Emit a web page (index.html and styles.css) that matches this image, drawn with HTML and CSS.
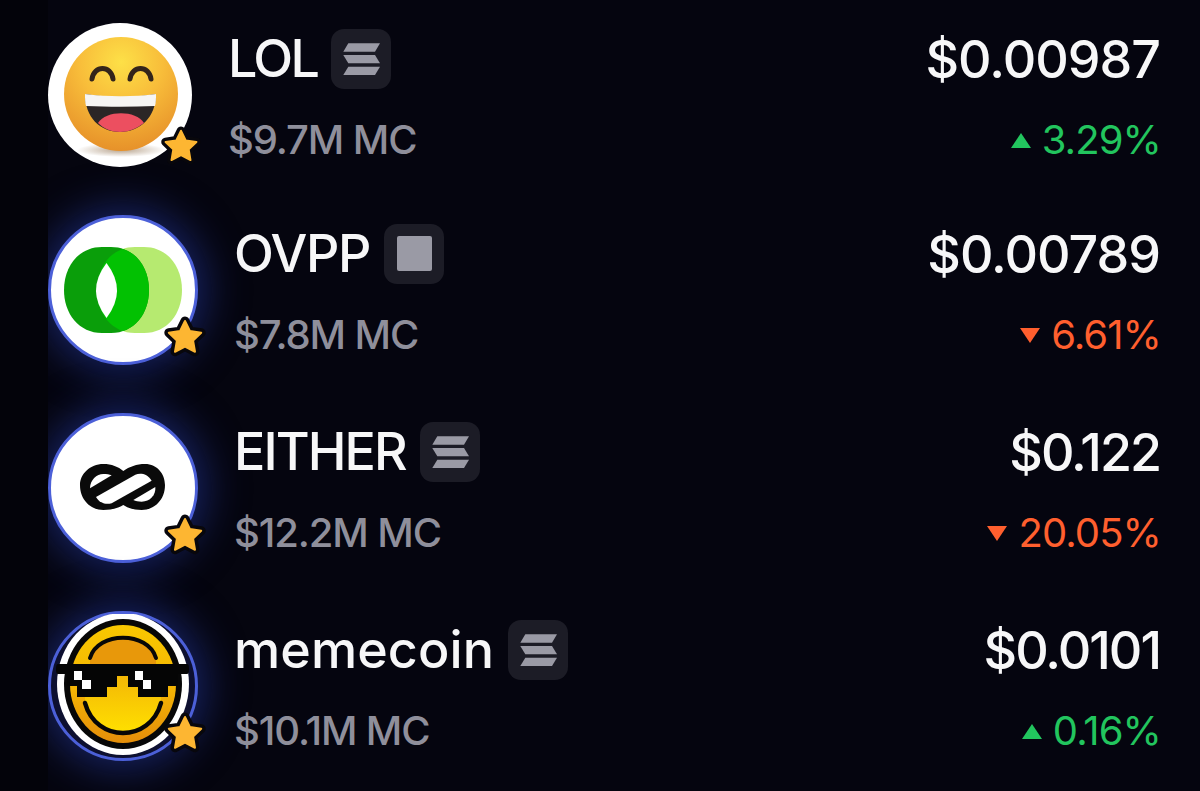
FILE: index.html
```html
<!DOCTYPE html>
<html lang="en">
<head>
    <meta charset="UTF-8">
    <title>Tokens</title>
    <link rel="stylesheet" href="styles.css">
</head>
<body>

<svg class="defs" width="0" height="0">
    <symbol id="solana" viewBox="0 0 60 60">
        <path d="M17.3 14.3H49L44 22.7H12.3Z"/>
        <path d="M12.3 26H44L49 34.3H17.3Z"/>
        <path d="M17.3 37.7H49L44 46H12.3Z"/>
    </symbol>
    <symbol id="star" viewBox="0 0 44 44">
        <polygon points="22,6 27,16.1 38.2,17.75 30.1,25.6 32,36.75 22,31.5 12,36.75 13.9,25.6 5.8,17.75 17,16.1" fill="#08070c" stroke="#08070c" stroke-width="9" stroke-linejoin="round"/>
        <polygon points="22,6 27,16.1 38.2,17.75 30.1,25.6 32,36.75 22,31.5 12,36.75 13.9,25.6 5.8,17.75 17,16.1" fill="#fdb632" stroke="#fdb632" stroke-width="2" stroke-linejoin="round"/>
    </symbol>
</svg>

<div class="token-list">

    <!-- LOL -->
    <div class="token-row">
        <div class="avatar avatar-plain">
            <svg viewBox="0 0 144 144" width="144" height="144">
                <defs>
                    <radialGradient id="faceFill" cx="50%" cy="22%" r="82%">
                        <stop offset="0" stop-color="#fde047"/>
                        <stop offset="0.45" stop-color="#f8bd3a"/>
                        <stop offset="1" stop-color="#e58d28"/>
                    </radialGradient>
                    <radialGradient id="floorFill" cx="50%" cy="50%" r="50%">
                        <stop offset="0" stop-color="#b8a48e"/>
                        <stop offset="1" stop-color="#ffffff"/>
                    </radialGradient>
                </defs>
                <ellipse cx="73" cy="127" rx="44" ry="7" fill="url(#floorFill)"/>
                <circle cx="73" cy="71" r="57" fill="url(#faceFill)"/>
                <path d="M44 56C46 42 63 42 65 56" fill="none" stroke="#33241a" stroke-width="5" stroke-linecap="round"/>
                <path d="M82 56C84 42 101 42 103 56" fill="none" stroke="#33241a" stroke-width="5" stroke-linecap="round"/>
                <path d="M37 71C60 75 86 75 108 71C108 94 92 109 72 109C52 109 37 94 37 71Z" fill="#2b2626"/>
                <path d="M37 71C60 74 86 74 108 71C108 76 108 79 107 83C84 84 60 84 38 83C37 79 37 76 37 71Z" fill="#f6f5f3"/>
                <path d="M50 100C58 87 88 87 96 100C88 106 80 109 72 109C64 109 56 106 50 100Z" fill="#ec4f60"/>
            </svg>
            <svg class="star"><use href="#star"/></svg>
        </div>
        <div class="token-info">
            <div class="name-line">
                <span class="token-name name-tight">LOL</span>
                <span class="chain-chip"><svg class="chain-icon"><use href="#solana"/></svg></span>
            </div>
            <div class="token-mc">$9.7M MC</div>
        </div>
        <div class="token-price">
            <div class="price">$0.00987</div>
            <div class="change up"><i class="arrow"></i>3.29%</div>
        </div>
    </div>

    <!-- OVPP -->
    <div class="token-row">
        <div class="avatar avatar-white">
            <svg viewBox="3 3 144 144" width="144" height="144">
                <defs>
                    <path id="ovppLeft" d="M54 32H63C86 32 101 51 101 75C101 99 86 118 63 118H54C31 118 16 99 16 75C16 51 31 32 54 32Z"/>
                    <path id="ovppRight" d="M87 32H96C119 32 134 51 134 75C134 99 119 118 96 118H87C64 118 49 99 49 75C49 51 64 32 87 32Z"/>
                    <clipPath id="ovppClip"><use href="#ovppRight"/></clipPath>
                </defs>
                <use href="#ovppRight" fill="#b6ea70"/>
                <use href="#ovppLeft" fill="#0a9e0a"/>
                <use href="#ovppLeft" fill="#02c102" clip-path="url(#ovppClip)"/>
                <path d="M58.5 48Q37.5 75.5 58.5 103Q79.5 75.5 58.5 48Z" fill="#fff"/>
            </svg>
            <svg class="star"><use href="#star"/></svg>
        </div>
        <div class="token-info">
            <div class="name-line">
                <span class="token-name">OVPP</span>
                <span class="chain-chip"><i class="square-icon"></i></span>
            </div>
            <div class="token-mc">$7.8M MC</div>
        </div>
        <div class="token-price">
            <div class="price">$0.00789</div>
            <div class="change down"><i class="arrow"></i>6.61%</div>
        </div>
    </div>

    <!-- EITHER -->
    <div class="token-row">
        <div class="avatar avatar-white">
            <svg viewBox="3 3 144 144" width="144" height="144">
                <g transform="translate(22 37) scale(0.3333)">
                    <path d="M100 42C125 42 145 50 160 63C178 50 200 42 225 42C262 42 285 72 285 105C285 148 255 180 215 180C193 180 175 175 160 165C142 175 125 180 100 180C60 180 30 148 30 105C30 72 60 42 100 42Z" fill="#0a0a0a"/>
                    <path d="M60 115C60 90 80 72 100 72C110 72 118 73 125 76Z" fill="#fff"/>
                    <path d="M78 141L196 74C210 68 232 70 245 92L125 160C105 165 88 158 78 141Z" fill="#fff"/>
                    <path d="M190 150L256 111C258 135 240 155 215 155C205 155 197 153 190 150Z" fill="#fff"/>
                </g>
            </svg>
            <svg class="star"><use href="#star"/></svg>
        </div>
        <div class="token-info">
            <div class="name-line">
                <span class="token-name name-mid">EITHER</span>
                <span class="chain-chip"><svg class="chain-icon"><use href="#solana"/></svg></span>
            </div>
            <div class="token-mc">$12.2M MC</div>
        </div>
        <div class="token-price">
            <div class="price price-tight">$0.122</div>
            <div class="change down"><i class="arrow"></i>20.05%</div>
        </div>
    </div>

    <!-- memecoin -->
    <div class="token-row">
        <div class="avatar avatar-coin">
            <svg viewBox="3 3 144 144" width="144" height="144">
                <defs>
                    <linearGradient id="coinFill" x1="0" y1="0" x2="0" y2="1">
                        <stop offset="0" stop-color="#f8c800"/>
                        <stop offset="0.55" stop-color="#f5b404"/>
                        <stop offset="1" stop-color="#e48e0a"/>
                    </linearGradient>
                    <linearGradient id="coinCenter" x1="0" y1="0" x2="0" y2="1">
                        <stop offset="0" stop-color="#f4b806"/>
                        <stop offset="1" stop-color="#ffe000"/>
                    </linearGradient>
                </defs>
                <ellipse cx="75" cy="73" rx="66" ry="71" fill="#fff"/>
                <ellipse cx="75" cy="73" rx="59" ry="65" fill="#070707"/>
                <ellipse cx="75" cy="73" rx="53" ry="59" fill="url(#coinFill)"/>
                <path d="M42 47C50 20 100 20 108 47V56H42Z" fill="#e8980a"/>
                <path d="M42 47C50 20 100 20 108 47" fill="none" stroke="#070707" stroke-width="4" stroke-linecap="round"/>
                <path d="M37 92C48 132 102 132 113 92V66H37Z" fill="url(#coinCenter)"/>
                <path d="M37 92C48 132 102 132 113 92" fill="none" stroke="#070707" stroke-width="4.5" stroke-linecap="round"/>
                <path d="M10 53H139Q141 53 141 58Q141 63 139 63H130V75H120V86H90V76H80V65H69V76H59V86H29V75H19V63H10Q8 63 8 58Q8 53 10 53Z" fill="#050505"/>
                <path d="M26 60H34V69H43V78H34V69H26ZM87 60H95V69H103V78H95V69H87Z" fill="#fff"/>
            </svg>
            <svg class="star"><use href="#star"/></svg>
        </div>
        <div class="token-info">
            <div class="name-line">
                <span class="token-name name-wide">memecoin</span>
                <span class="chain-chip"><svg class="chain-icon"><use href="#solana"/></svg></span>
            </div>
            <div class="token-mc">$10.1M MC</div>
        </div>
        <div class="token-price">
            <div class="price price-tight">$0.0101</div>
            <div class="change up"><i class="arrow"></i>0.16%</div>
        </div>
    </div>

</div>

</body>
</html>
```

FILE: styles.css
```css
body {
    margin: 0;
    background-color: #03030a;
    font-family: 'Inter', 'Liberation Sans', sans-serif;
    color: #f7f7f8;
    overflow: hidden;
}
.defs {
    display: block;
    height: 0;
}
.token-list {
    margin-left: 48px;
    height: 791px;
    padding: 23px 40px 0 0;
    box-sizing: border-box;
    background-color: #05050f;
    overflow: hidden;
    display: flex;
    flex-direction: column;
    gap: 48px;
}
.token-row {
    display: flex;
    align-items: center;
    gap: 36px;
}
.avatar {
    position: relative;
    flex: none;
    box-sizing: border-box;
    width: 150px;
    height: 150px;
    border: 3px solid #4c60d8;
    border-radius: 50%;
    box-shadow: 0 0 40px 8px rgba(36, 56, 160, 0.58);
}
.avatar svg {
    display: block;
}
.avatar-white {
    background-color: #fff;
}
.avatar-coin {
    background-color: #0d1030;
}
.avatar-plain {
    width: 144px;
    height: 144px;
    border: none;
    background-color: #fff;
    box-shadow: none;
}
.star {
    position: absolute;
    right: -12px;
    bottom: 3px;
    width: 44px;
    height: 44px;
}
.avatar-plain .star {
    right: -10px;
    bottom: 0;
    width: 42px;
    height: 42px;
}
.token-info {
    flex: 1;
    display: flex;
    flex-direction: column;
    gap: 31px;
}
.name-line {
    display: flex;
    align-items: center;
    gap: 14px;
    height: 60px;
    margin-top: -2px;
}
.token-name {
    font-size: 52px;
    font-weight: 500;
    letter-spacing: -1.4px;
}
.name-tight {
    letter-spacing: -2.6px;
}
.name-mid {
    letter-spacing: -1.9px;
}
.name-wide {
    letter-spacing: 0.1px;
}
.chain-chip {
    display: flex;
    align-items: center;
    justify-content: center;
    width: 60px;
    height: 60px;
    border-radius: 13px;
    background-color: #1c1c26;
}
.chain-icon {
    width: 60px;
    height: 60px;
    fill: #9a9aa5;
}
.square-icon {
    display: block;
    width: 35px;
    height: 35px;
    border-radius: 2px;
    background-color: #9a9aa5;
}
.token-mc {
    font-size: 40px;
    font-weight: 450;
    line-height: 40px;
    letter-spacing: -1.1px;
    color: #8f8f9b;
}
.token-price {
    display: flex;
    flex-direction: column;
    align-items: flex-end;
    gap: 30px;
}
.price {
    font-size: 52px;
    font-weight: 500;
    line-height: 60px;
    letter-spacing: -1px;
}
.price-tight {
    letter-spacing: -2px;
}
.change {
    display: flex;
    align-items: center;
    gap: 11px;
    font-size: 40px;
    line-height: 40px;
    letter-spacing: -0.9px;
    margin-right: -1px;
}
.arrow {
    width: 0;
    height: 0;
    border-left: 10px solid transparent;
    border-right: 10px solid transparent;
}
.up {
    color: #22c55e;
}
.up .arrow {
    border-bottom: 15px solid #22c55e;
}
.down {
    color: #ff5f2e;
}
.down .arrow {
    border-top: 15px solid #ff5f2e;
}
```
